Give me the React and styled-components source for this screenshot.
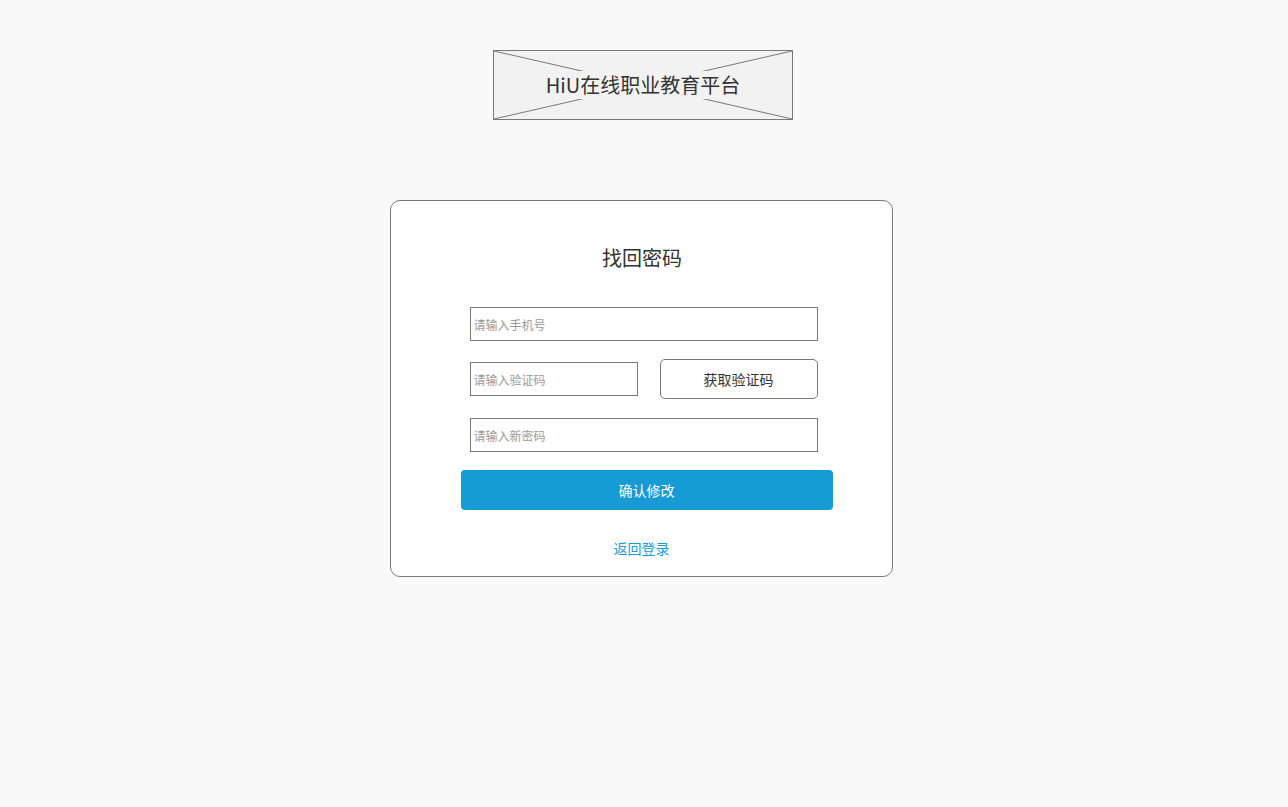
import styled, { createGlobalStyle } from 'styled-components'

const GlobalStyle = createGlobalStyle`
  body {
    margin: 0;
    background: #f9f9f9;
    font-family: "Noto Sans CJK SC", "Noto Sans", sans-serif;
  }
  * { box-sizing: border-box; }
`

const Page = styled.div`
  display: flex;
  flex-direction: column;
  align-items: center;
  padding-top: 50px;
  min-height: 807px;
`

const Logo = styled.div`
  position: relative;
  width: 300px;
  height: 70px;
  margin-right: 2px;
  border: 1px solid #797979;
  background: #f2f2f2;
  display: flex;
  align-items: center;
  justify-content: center;

  svg {
    position: absolute;
    inset: 0;
  }
`

const LogoText = styled.span`
  position: relative;
  background: #f2f2f2;
  color: #333;
  font-size: 20px;
  line-height: 28px;
  padding: 0 2px;
`

const Card = styled.div`
  margin-top: 80px;
  margin-right: 6px;
  width: 503px;
  height: 377px;
  background: #fff;
  border: 1px solid #797979;
  border-radius: 10px;
  padding: 43px 0 0 79px;
`

const Title = styled.h2`
  margin: 0 0 35px;
  width: 345px;
  font-size: 20px;
  line-height: 28px;
  font-weight: 400;
  color: #333;
  text-align: center;
`

const Input = styled.input`
  display: block;
  width: ${p => p.$w || 348}px;
  height: 34px;
  border: 1px solid #797979;
  background: #fff;
  padding: 0 3px;
  font-family: inherit;
  font-size: 12px;
  color: #333;
  outline: none;

  &::placeholder { color: #999; }
`

const CodeRow = styled.div`
  display: flex;
  align-items: center;
  justify-content: space-between;
  width: 348px;
  margin: 18px 0 19px;
`

const CodeButton = styled.button`
  width: 158px;
  height: 40px;
  border: 1px solid #797979;
  border-radius: 5px;
  background: #fff;
  font-family: inherit;
  font-size: 14px;
  color: #333;
`

const Submit = styled.button`
  display: block;
  margin: 18px 0 0 -9px;
  width: 372px;
  height: 40px;
  border: none;
  border-radius: 4px;
  background: #169bd5;
  color: #fff;
  font-family: inherit;
  font-size: 14px;
`

const BackLink = styled.a`
  display: block;
  margin-top: 28px;
  width: 344px;
  text-align: center;
  font-size: 14px;
  line-height: 20px;
  color: #169bd5;
  text-decoration: none;
`

export default function App() {
  return (
    <>
      <GlobalStyle />
      <Page>
        <Logo>
          <svg width="298" height="68" viewBox="0 0 298 68" preserveAspectRatio="none">
            <line x1="0" y1="0" x2="298" y2="68" stroke="#797979" strokeWidth="1" />
            <line x1="0" y1="68" x2="298" y2="0" stroke="#797979" strokeWidth="1" />
          </svg>
          <LogoText>HiU在线职业教育平台</LogoText>
        </Logo>
        <Card>
          <Title>找回密码</Title>
          <Input placeholder="请输入手机号" />
          <CodeRow>
            <Input $w={168} placeholder="请输入验证码" />
            <CodeButton>获取验证码</CodeButton>
          </CodeRow>
          <Input placeholder="请输入新密码" />
          <Submit>确认修改</Submit>
          <BackLink href="#">返回登录</BackLink>
        </Card>
      </Page>
    </>
  )
}
